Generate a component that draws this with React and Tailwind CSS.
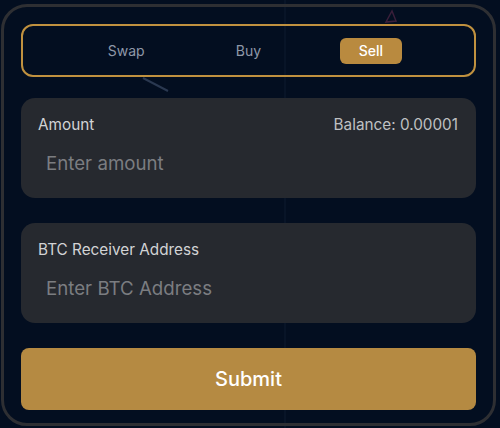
import React, { useState } from 'react';

/* ── Trade panel (Swap / Buy / Sell) ─────────────────────────── */
export default function App() {
  const [tab, setTab] = useState('Sell');
  const tabs = ['Swap', 'Buy', 'Sell'];

  return (
    <div
      className="relative w-[500px] h-[428px] overflow-hidden bg-[#030e20]"
      style={{ fontFamily: 'Inter, "Noto Sans", sans-serif' }}>

      {/* faint background decoration */}
      <svg className="absolute inset-0 pointer-events-none" width="500" height="428">
        <line x1="285" y1="0" x2="285" y2="428" stroke="#0e1a2e" strokeWidth="1" />
        <line x1="143" y1="78" x2="168" y2="91" stroke="#2a3850" strokeWidth="2" />
        <path d="M386 22 L392 11 L396 21 Z" fill="none" stroke="#3a1f3a" strokeWidth="1.5" />
      </svg>

      <div className="relative ml-[1px] mt-[4px] h-[422px] w-[495px] rounded-[26px] border-[3px] border-[#2e2f33] px-[17px] pt-[17px]">

        {/* ── Tabs ───────────────────────────────────────────── */}
        <div className="flex h-[53px] items-center rounded-[12px] border-2 border-[#c0913f] px-[42px]">
          {tabs.map((t) => (
            <div key={t} className="flex flex-1 justify-center">
              <button
                onClick={() => setTab(t)}
                className={
                  t === tab
                    ? 'h-[26px] w-[62px] rounded-[6px] bg-[#b98a3f] text-[14px] font-medium text-white'
                    : 'h-[26px] w-[62px] rounded-[6px] text-[14px] text-[#8f98a8]'
                }>
                {t}
              </button>
            </div>
          ))}
        </div>

        {/* ── Amount ─────────────────────────────────────────── */}
        <div className="mt-[21px] h-[100px] rounded-[14px] bg-[#26292f] pl-[17px] pr-[18px] pt-[16px]">
          <div className="flex items-center justify-between text-[15.3px] text-[#d2d3d5]">
            <span>Amount</span>
            <span className="text-[#bfc0c2]">Balance: 0.00001</span>
          </div>
          <input
            className="mt-[13px] w-full bg-transparent pl-[8px] text-[18.7px] text-white outline-none placeholder:text-[#7b7d81]"
            placeholder="Enter amount"
          />
        </div>

        {/* ── Receiver address ───────────────────────────────── */}
        <div className="mt-[25px] h-[100px] rounded-[14px] bg-[#26292f] px-[17px] pt-[16px]">
          <div className="text-[15.3px] text-[#d2d3d5]">BTC Receiver Address</div>
          <input
            className="mt-[13px] w-full bg-transparent pl-[8px] text-[18.7px] text-white outline-none placeholder:text-[#7b7d81]"
            placeholder="Enter BTC Address"
          />
        </div>

        {/* ── Submit ─────────────────────────────────────────── */}
        <button className="mt-[25px] h-[62px] w-full rounded-[8px] bg-[#b58a42] text-[20px] font-medium text-white">
          Submit
        </button>
      </div>
    </div>
  );
}
